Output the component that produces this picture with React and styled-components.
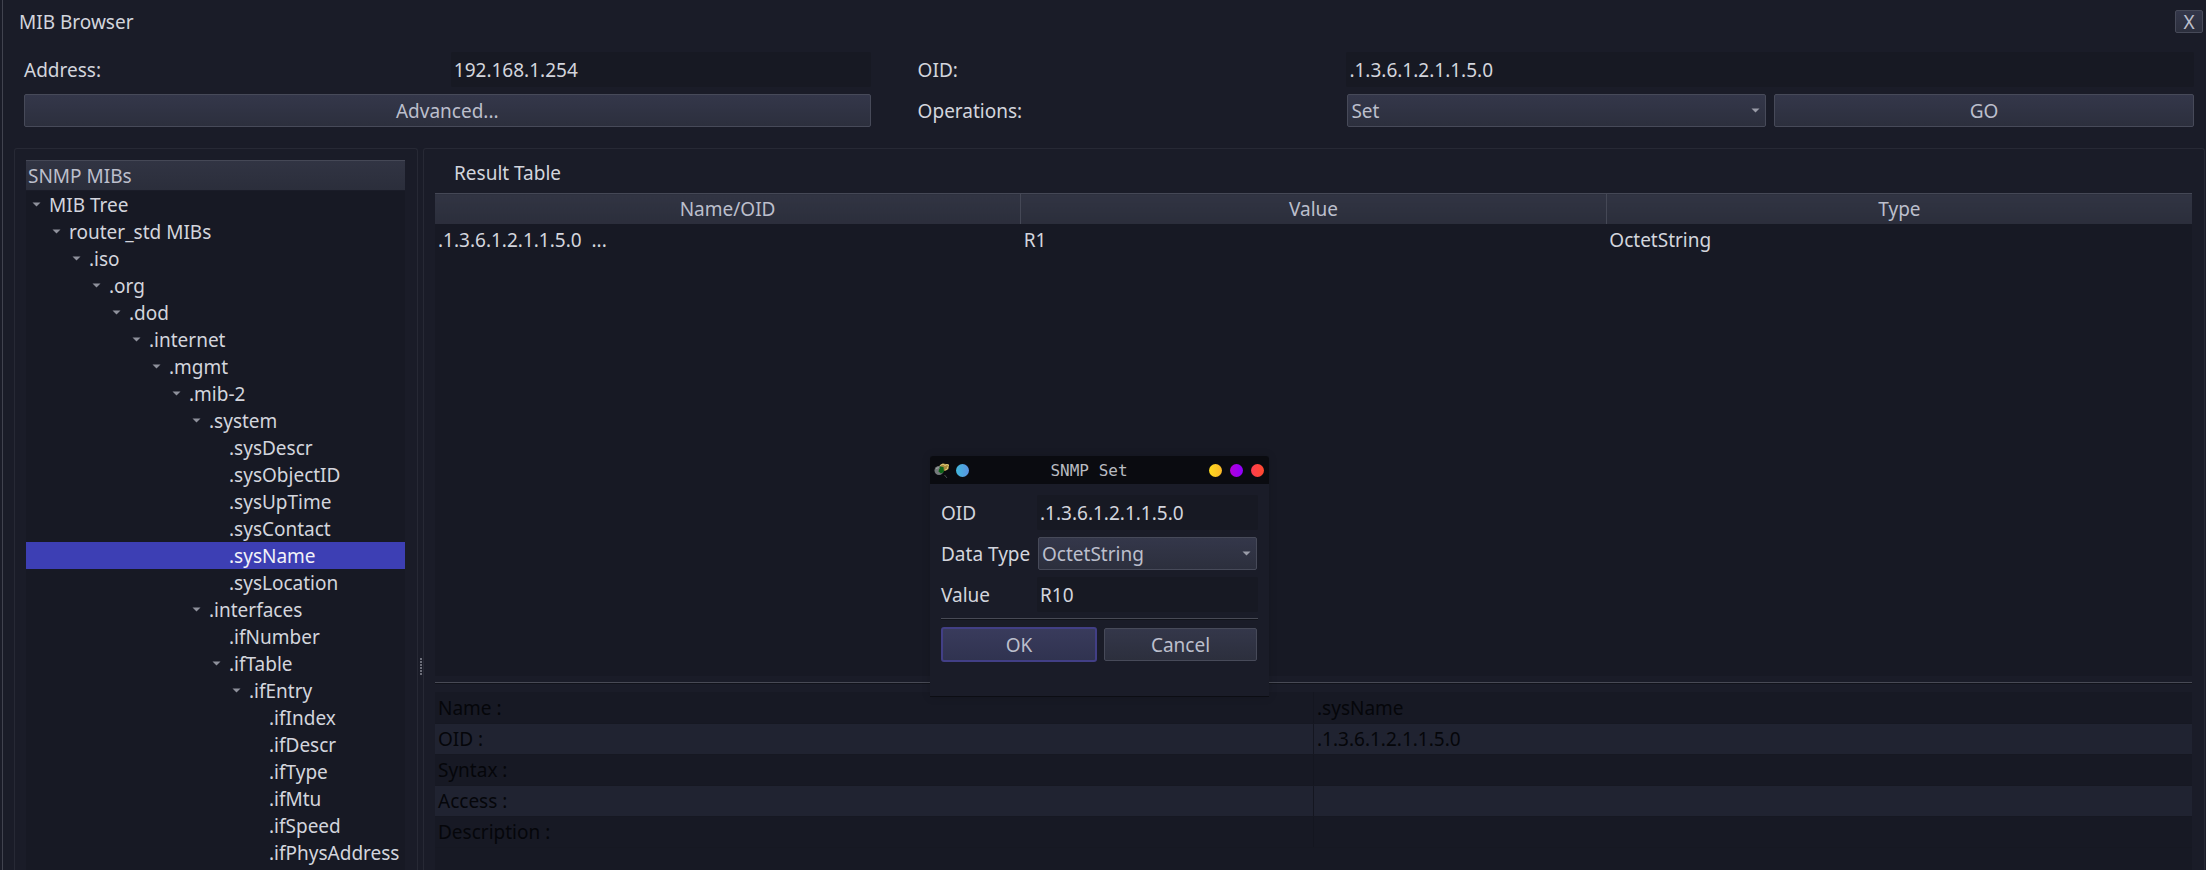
import React, { useState } from "react";
import styled, { createGlobalStyle, css } from "styled-components";

const Global = createGlobalStyle`
  *, *::before, *::after { box-sizing: border-box; }
  html, body, #root { height: 100%; }
  body { margin: 0; background: #1a1c28; overflow: hidden; }
  body, button, input, select, table {
    font-family: "Noto Sans", "Open Sans", sans-serif;
    font-size: 19px;
    line-height: 27px;
    color: #d3d5dd;
  }
`;

const Window = styled.main`
  position: relative;
  min-height: 100%;
  height: 100vh;
  display: flex;
  flex-direction: column;
  padding-left: 2px;
  overflow: hidden;
  background: #1a1c28;
  &::before {
    content: "";
    position: absolute;
    inset: 0 auto 0 2px;
    width: 1px;
    background: #41434f;
  }
`;

const TitleBar = styled.header`
  display: flex;
  align-items: center;
  justify-content: space-between;
  height: 43px;
  padding: 0 3px 0 17px;
`;

const Title = styled.h1`
  margin: 0;
  padding-top: 2px;
  font-size: 19px;
  font-weight: 400;
`;

const raised = css`
  border: 1px solid #474a59;
  border-radius: 2px;
  background: linear-gradient(#34374a, #2c2f3d);
  color: #bcbfcc;
`;

const Button = styled.button`
  ${raised}
  width: 100%;
  height: 33px;
  padding: 2px 0 0;
  ${(p) =>
    p.$primary &&
    css`
      height: 35px;
      border: 2px solid #423f86;
      border-radius: 3px;
      background: linear-gradient(#393b5c, #303350);
    `}
`;

const CloseButton = styled.button`
  ${raised}
  width: 28px;
  height: 23px;
  padding: 0;
  line-height: 20px;
`;

const Field = styled.input`
  width: 100%;
  height: 35px;
  padding: 0 3px;
  border: 0;
  border-radius: 2px;
  outline: 0;
  background: #171923;
`;

const SelectWrap = styled.div`
  position: relative;
  width: 100%;
  height: 33px;
  padding: 0 1px;
`;

const SelectBox = styled.select`
  ${raised}
  width: 100%;
  height: 33px;
  padding: 2px 24px 0 3px;
  appearance: none;
`;

const SelectArrow = styled.svg`
  position: absolute;
  right: 7px;
  top: 14px;
  pointer-events: none;
`;

const Settings = styled.section`
  display: grid;
  grid-template-columns: 427fr 420fr 476fr 421fr 427fr;
  align-items: center;
  row-gap: 7px;
  padding: 9px 12px 21px 22px;
`;

const Cell = styled.div`
  grid-column: span ${(p) => p.$span || 1};
  padding-left: ${(p) => p.$indent || 0}px;
`;

const Label = styled.label`
  display: block;
  padding: 2px 0 0 ${(p) => p.$indent || 0}px;
`;

const Panels = styled.div`
  flex: 1;
  min-height: 0;
  display: grid;
  grid-template-columns: 404px 5px minmax(0, 1fr);
  padding: 0 1px 0 12px;
`;

const Panel = styled.section`
  display: flex;
  flex-direction: column;
  min-width: 0;
  min-height: 0;
  padding: 11px 12px 0 11px;
  border: 1px solid #272935;
  border-bottom: 0;
  border-radius: 3px 3px 0 0;
`;

const Splitter = styled.div`
  display: flex;
  align-items: flex-end;
  justify-content: flex-end;
  padding-bottom: 194px;
`;

const header = css`
  height: 30px;
  border-top: 1px solid #454856;
  background: linear-gradient(#313443, #2b2e3b);
  color: #bcbfcc;
  font-weight: 400;
`;

const TreeHeader = styled.h2`
  ${header}
  flex: none;
  margin: 0 0 1px;
  padding-left: 2px;
  font-size: 19px;
  line-height: 31px;
`;

const Tree = styled.ul`
  flex: 1;
  min-height: 0;
  margin: 0;
  padding: 0;
  overflow: hidden;
  list-style: none;
  background: #171924;
`;

const TreeItem = styled.li`
  display: flex;
  align-items: center;
  gap: 8px;
  height: 27px;
  padding-left: ${(p) => 6 + p.$depth * 20}px;
  cursor: default;
  ${(p) => p.$selected && css`background: #3d3fb4; color: #f2f2f8;`}
`;

const TreeName = styled.span`
  padding-top: 2px;
`;

const Spacer = styled.span`
  flex: none;
  width: 9px;
`;

const ResultTitle = styled.h2`
  flex: none;
  margin: 0;
  padding: 0 0 6px 19px;
  font-size: 19px;
  font-weight: 400;
`;

const ResultArea = styled.div`
  flex: none;
  height: 483px;
  background: #171924;
`;

const Table = styled.table`
  width: 100%;
  border-collapse: collapse;
  table-layout: fixed;
`;

const HeadCell = styled.th`
  ${header}
  padding: 0;
  line-height: 28px;
  & + & { border-left: 1px solid #454856; }
`;

const ResultCell = styled.td`
  height: 34px;
  padding: 0 3px;
  white-space: pre;
`;

const Divider = styled.hr`
  flex: none;
  width: 100%;
  height: 2px;
  margin: ${(p) => p.$before}px 0 ${(p) => p.$after}px;
  border: 0;
  border-top: 1px solid #484a55;
  border-bottom: 1px solid #11131b;
`;

const DetailArea = styled.div`
  flex: 1;
  background: #171924;
`;

const DetailRow = styled.tr`
  height: 31px;
  color: #05060a;
  background: #171924;
  &:nth-child(even) { background: #202331; }
`;

const DetailCell = styled.td`
  height: 31px;
  padding: 2px 3px 0;
  border-bottom: 1px solid #161822;
  & + & { border-left: 1px solid #141620; }
`;

const Dialog = styled.section`
  position: absolute;
  left: 930px;
  top: 456px;
  width: 339px;
  height: 241px;
  border-radius: 3px 3px 0 0;
  background: #1a1c28;
  border-bottom: 1px solid #0c0d13;
  box-shadow: 0 0 8px rgba(0, 0, 0, 0.15);
`;

const DialogBar = styled.header`
  display: flex;
  align-items: center;
  justify-content: space-between;
  height: 28px;
  padding: 0 5px 0 4px;
  border-radius: 3px 3px 0 0;
  background: #0a0b10;
`;

const DialogTitle = styled.h2`
  margin: 0;
  padding-top: 2px;
  font: 400 16px/26px "DejaVu Sans Mono", monospace;
  color: #b9bbc1;
`;

const BarGroup = styled.div`
  display: flex;
  align-items: center;
  gap: ${(p) => p.$gap}px;
`;

const Dot = styled.button`
  width: 13px;
  height: 13px;
  padding: 0;
  border: 0;
  border-radius: 50%;
  background: ${(p) => p.$color};
`;

const DialogForm = styled.form`
  padding: 11px 11px 0;
`;

const DialogFields = styled.div`
  display: grid;
  grid-template-columns: 96px minmax(0, 1fr);
  align-items: center;
  row-gap: 7px;
`;

const DialogActions = styled.div`
  display: grid;
  grid-template-columns: 156px 153px;
  align-items: center;
  gap: 7px;
`;

const Arrow = () => (
  <svg width="9" height="5" viewBox="0 0 9 5" aria-hidden="true">
    <path d="M0.5 0.5h8L4.5 4.5z" fill="#8f919c" />
  </svg>
);

const Grip = () => (
  <svg width="3" height="18" viewBox="0 0 3 18" aria-hidden="true">
    {[0, 3, 6, 9, 12, 15].map((y) => (
      <rect key={y} x="0" y={y} width="2" height="2" fill="#6b6d78" />
    ))}
  </svg>
);

const AppIcon = () => (
  <svg width="16" height="15" viewBox="0 0 16 15" aria-hidden="true">
    <path d="M5 3l4-2.500 6 1-.500 4.500-4 2-3-1z" fill="#a88a3c" />
    <path d="M6 2.500l3-1.500 2 1.500 2-1 2 1M14 3.500l-1 3-2 .5" stroke="#e6d27c" fill="none" />
    <ellipse cx="5" cy="7.500" rx="4.500" ry="4.500" fill="#74797a" />
    <path d="M2 5.500q3-2 4 .5" stroke="#a5aaa6" fill="none" />
    <path d="M6 3.500l3.500.5.5 5-3 1.500-2.500-2z" fill="#0f6418" />
    <path d="M10.500 12l2.500 3" stroke="#4a4d50" />
  </svg>
);

const tree = [
  ["MIB Tree", 0, true],
  ["router_std MIBs", 1, true],
  [".iso", 2, true],
  [".org", 3, true],
  [".dod", 4, true],
  [".internet", 5, true],
  [".mgmt", 6, true],
  [".mib-2", 7, true],
  [".system", 8, true],
  [".sysDescr", 9],
  [".sysObjectID", 9],
  [".sysUpTime", 9],
  [".sysContact", 9],
  [".sysName", 9],
  [".sysLocation", 9],
  [".interfaces", 8, true],
  [".ifNumber", 9],
  [".ifTable", 9, true],
  [".ifEntry", 10, true],
  [".ifIndex", 11],
  [".ifDescr", 11],
  [".ifType", 11],
  [".ifMtu", 11],
  [".ifSpeed", 11],
  [".ifPhysAddress", 11],
];

const details = [
  ["Name :", ".sysName"],
  ["OID :", ".1.3.6.1.2.1.1.5.0"],
  ["Syntax :", ""],
  ["Access :", ""],
  ["Description :", ""],
];

function Select({ id, options }) {
  return (
    <SelectWrap>
      <SelectBox id={id}>
        {options.map((o) => (
          <option key={o}>{o}</option>
        ))}
      </SelectBox>
      <SelectArrow width="9" height="5" viewBox="0 0 9 5" aria-hidden="true">
        <path d="M0.5 0.5h8L4.5 4.5z" fill="#9a9ca8" />
      </SelectArrow>
    </SelectWrap>
  );
}

export default function App() {
  const [selected, setSelected] = useState(".sysName");
  return (
    <>
      <Global />
      <Window>
        <TitleBar>
          <Title>MIB Browser</Title>
          <CloseButton aria-label="Close">X</CloseButton>
        </TitleBar>
        <Settings>
          <Label htmlFor="address">Address:</Label>
          <Field id="address" defaultValue="192.168.1.254" />
          <Label htmlFor="oid" $indent={47}>OID:</Label>
          <Cell $span={2}>
            <Field id="oid" defaultValue=".1.3.6.1.2.1.1.5.0" />
          </Cell>
          <Cell $span={2}>
            <Button>Advanced...</Button>
          </Cell>
          <Label htmlFor="operation" $indent={47}>Operations:</Label>
          <Select id="operation" options={["Set", "Get", "Get Next", "Walk"]} />
          <Cell $indent={7}>
            <Button>GO</Button>
          </Cell>
        </Settings>
        <Panels>
          <Panel>
            <TreeHeader>SNMP MIBs</TreeHeader>
            <Tree role="tree">
              {tree.map(([name, depth, open]) => (
                <TreeItem
                  key={name}
                  role="treeitem"
                  aria-selected={selected === name}
                  $depth={depth}
                  $selected={selected === name}
                  onClick={() => setSelected(name)}
                >
                  {open ? <Arrow /> : <Spacer />}
                  <TreeName>{name}</TreeName>
                </TreeItem>
              ))}
            </Tree>
          </Panel>
          <Splitter>
            <Grip />
          </Splitter>
          <Panel>
            <ResultTitle>Result Table</ResultTitle>
            <ResultArea>
              <Table>
                <thead>
                  <tr>
                    <HeadCell>Name/OID</HeadCell>
                    <HeadCell>Value</HeadCell>
                    <HeadCell>Type</HeadCell>
                  </tr>
                </thead>
                <tbody>
                  <tr>
                    <ResultCell>{".1.3.6.1.2.1.1.5.0  ..."}</ResultCell>
                    <ResultCell>R1</ResultCell>
                    <ResultCell>OctetString</ResultCell>
                  </tr>
                </tbody>
              </Table>
            </ResultArea>
            <Divider $before={6} $after={8} />
            <DetailArea>
              <Table>
                <tbody>
                  {details.map(([name, value]) => (
                    <DetailRow key={name}>
                      <DetailCell>{name}</DetailCell>
                      <DetailCell>{value}</DetailCell>
                    </DetailRow>
                  ))}
                </tbody>
              </Table>
            </DetailArea>
          </Panel>
        </Panels>
        <Dialog role="dialog" aria-labelledby="set-title">
          <DialogBar>
            <BarGroup $gap={6}>
              <AppIcon />
              <Dot $color="linear-gradient(90deg, #41b8dc, #5b92e0)" aria-label="Pin" />
            </BarGroup>
            <DialogTitle id="set-title">SNMP Set</DialogTitle>
            <BarGroup $gap={8}>
              <Dot $color="linear-gradient(90deg, #ffdc1e, #fbb829)" aria-label="Minimize" />
              <Dot $color="linear-gradient(90deg, #b400d8, #8f00ff)" aria-label="Maximize" />
              <Dot $color="linear-gradient(90deg, #ff3d50, #ff4a2e)" aria-label="Close" />
            </BarGroup>
          </DialogBar>
          <DialogForm onSubmit={(e) => e.preventDefault()}>
            <DialogFields>
              <Label htmlFor="set-oid">OID</Label>
              <Field id="set-oid" defaultValue=".1.3.6.1.2.1.1.5.0" />
              <Label htmlFor="set-type">Data Type</Label>
              <Select id="set-type" options={["OctetString", "Integer", "IpAddress"]} />
              <Label htmlFor="set-value">Value</Label>
              <Field id="set-value" defaultValue="R10" />
            </DialogFields>
            <Divider $before={6} $after={7} />
            <DialogActions>
              <Button $primary>OK</Button>
              <Button type="button">Cancel</Button>
            </DialogActions>
          </DialogForm>
        </Dialog>
      </Window>
    </>
  );
}
